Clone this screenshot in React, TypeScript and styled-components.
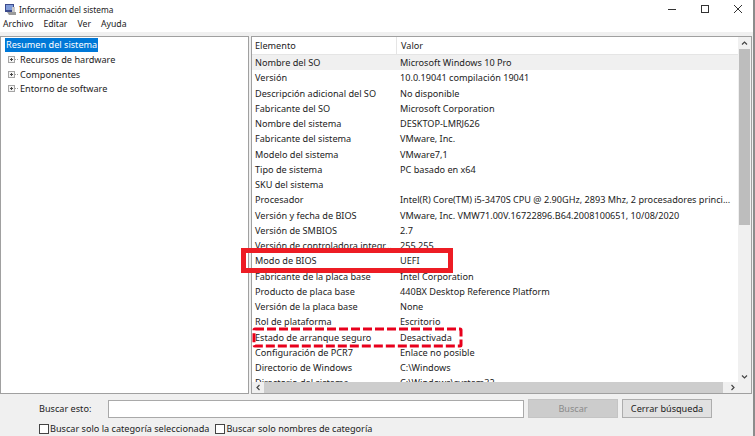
import styled, { createGlobalStyle } from "styled-components";

const GlobalStyle = createGlobalStyle`
  html, body {
    margin: 0;
    padding: 0;
    background: #f0f0f0;
  }
  * {
    box-sizing: border-box;
  }
`;

const Win = styled.div`
  position: relative;
  width: 755px;
  height: 436px;
  overflow: hidden;
  display: flex;
  flex-direction: column;
  background: #f0f0f0;
  border-right: 2px solid #8c8c8c;
  font-family: "Noto Sans", "Open Sans", sans-serif;
  font-size: 9.15px;
  color: #222;
`;

const TitleBar = styled.div`
  height: 18px;
  flex: none;
  display: flex;
  align-items: center;
  background: #fff;
  padding-left: 4px;
`;

const TitleText = styled.span`
  margin-left: 2px;
  font-size: 8.3px;
`;

const WinButtons = styled.div`
  margin-left: auto;
  display: flex;
  align-items: center;
  gap: 23px;
  padding-right: 10px;
`;

const MenuBar = styled.div`
  height: 14px;
  flex: none;
  display: flex;
  align-items: center;
  gap: 10px;
  padding: 0 0 2px 3px;
  background: #fff;
  font-size: 8.7px;
`;

const Main = styled.div`
  height: 358px;
  margin-top: 4px;
  flex: none;
  display: flex;
  gap: 2px;
  padding-right: 1px;
`;

const TreePane = styled.div`
  width: 249px;
  flex: none;
  padding: 1px 0 0 4px;
  background: #fff;
  border: 1px solid #a0a0a0;
`;

const TreeRow = styled.div`
  height: 14.5px;
  display: flex;
  align-items: center;
  white-space: nowrap;
`;

const Selected = styled.span`
  background: #0078d7;
  color: #fff;
  padding: 0 1px;
  line-height: 14px;
`;

const Plus = styled.span`
  position: relative;
  width: 7px;
  height: 7px;
  margin-left: 3px;
  border: 1px solid #a5a5a5;
  background: #f4f4f4;
  &::before {
    content: "";
    position: absolute;
    left: 1px;
    top: 2px;
    width: 3px;
    height: 1px;
    background: #444;
  }
  &::after {
    content: "";
    position: absolute;
    left: 2px;
    top: 1px;
    width: 1px;
    height: 3px;
    background: #444;
  }
`;

const Connector = styled.span`
  width: 3px;
  margin-right: 2px;
  border-top: 1px dotted #a5a5a5;
`;

const ListPane = styled.div`
  position: relative;
  flex: 1;
  min-width: 0;
  display: flex;
  background: #fff;
  border: 1px solid #a0a0a0;
`;

const ListBody = styled.div`
  flex: 1;
  min-width: 0;
  display: flex;
  flex-direction: column;
`;

const Table = styled.div`
  flex: 1;
  min-height: 0;
  overflow: hidden;
`;

const HeaderRow = styled.div`
  height: 18px;
  display: grid;
  grid-template-columns: 144px 1fr;
  align-items: center;
  border-bottom: 1px solid #e5e5e5;
`;

const HeaderCell = styled.div<{ $sep?: boolean }>`
  height: 100%;
  display: flex;
  align-items: center;
  padding-left: ${(p) => (p.$sep ? "4px" : "3px")};
  border-left: ${(p) => (p.$sep ? "1px solid #e5e5e5" : "none")};
`;

const Row = styled.div<{ $shade?: boolean }>`
  height: 15.25px;
  display: grid;
  grid-template-columns: 144px 1fr;
  align-items: center;
  background: ${(p) => (p.$shade ? "#f0f0f0" : "#fff")};
  white-space: nowrap;
`;

const Cell = styled.div`
  padding-left: 3px;
  overflow: hidden;
`;

const ValueCell = styled(Cell)`
  padding-left: 4px;
`;

const VScroll = styled.div`
  width: 13px;
  flex: none;
  display: flex;
  flex-direction: column;
  background: #f0f0f0;
`;

const Arrow = styled.div`
  height: 12px;
  flex: none;
  display: flex;
  align-items: center;
  justify-content: center;
`;

const VThumb = styled.div`
  height: 176px;
  flex: none;
  margin: 0 1px;
  background: #bdbdbd;
`;

const VTrack = styled.div`
  flex: 1;
`;

const HScroll = styled.div`
  height: 11px;
  flex: none;
  display: flex;
  background: #f0f0f0;
`;

const HArrow = styled.div`
  width: 12px;
  flex: none;
  display: flex;
  align-items: center;
  justify-content: center;
`;

const HThumb = styled.div`
  flex: 1;
  background: #cdcdcd;
`;

const HTrack = styled.div`
  width: 3px;
  flex: none;
`;

const Corner = styled.div`
  height: 11px;
  flex: none;
  background: #f0f0f0;
`;

const Mark = styled.div<{ $x: number; $y: number; $w: number; $h: number }>`
  position: absolute;
  left: ${(p) => p.$x}px;
  top: ${(p) => p.$y}px;
  width: ${(p) => p.$w}px;
  height: ${(p) => p.$h}px;
  border: 5px solid #ed1c24;
  pointer-events: none;
`;

const DashedMark = styled.svg`
  position: absolute;
  left: 0;
  top: 290px;
  pointer-events: none;
`;

const SearchRow = styled.div`
  margin-top: 5px;
  height: 19px;
  flex: none;
  display: flex;
  align-items: center;
  padding-left: 39px;
`;

const SearchLabel = styled.span`
  width: 69px;
  flex: none;
`;

const SearchInput = styled.div`
  width: 416px;
  height: 18px;
  flex: none;
  background: #fff;
  border: 1px solid #a9a9a9;
`;

const Btn = styled.div<{ $off?: boolean }>`
  height: 19px;
  width: 90px;
  flex: none;
  display: flex;
  align-items: center;
  justify-content: center;
  margin-left: 4px;
  background: ${(p) => (p.$off ? "#cccccc" : "#e1e1e1")};
  color: ${(p) => (p.$off ? "#8a8a8a" : "#222")};
  border: 1px solid ${(p) => (p.$off ? "#c4c4c4" : "#adadad")};
`;

const CheckRow = styled.div`
  margin-top: 4px;
  display: flex;
  align-items: center;
  padding-left: 39px;
  gap: 6px;
`;

const CheckItem = styled.label`
  display: flex;
  align-items: center;
  gap: 1px;
  white-space: nowrap;
`;

const Box = styled.span`
  width: 10px;
  height: 10px;
  flex: none;
  background: #fff;
  border: 1px solid #444;
`;

const rows = [
  ["Nombre del SO", "Microsoft Windows 10 Pro"],
  ["Versión", "10.0.19041 compilación 19041"],
  ["Descripción adicional del SO", "No disponible"],
  ["Fabricante del SO", "Microsoft Corporation"],
  ["Nombre del sistema", "DESKTOP-LMRJ626"],
  ["Fabricante del sistema", "VMware, Inc."],
  ["Modelo del sistema", "VMware7,1"],
  ["Tipo de sistema", "PC basado en x64"],
  ["SKU del sistema", ""],
  ["Procesador", "Intel(R) Core(TM) i5-3470S CPU @ 2.90GHz, 2893 Mhz, 2 procesadores princi..."],
  ["Versión y fecha de BIOS", "VMware, Inc. VMW71.00V.16722896.B64.2008100651, 10/08/2020"],
  ["Versión de SMBIOS", "2.7"],
  ["Versión de controladora integr...", "255.255"],
  ["Modo de BIOS", "UEFI"],
  ["Fabricante de la placa base", "Intel Corporation"],
  ["Producto de placa base", "440BX Desktop Reference Platform"],
  ["Versión de la placa base", "None"],
  ["Rol de plataforma", "Escritorio"],
  ["Estado de arranque seguro", "Desactivada"],
  ["Configuración de PCR7", "Enlace no posible"],
  ["Directorio de Windows", "C:\\Windows"],
  ["Directorio del sistema", "C:\\Windows\\system32"],
];

const Chevron = ({ d }: { d: string }) => (
  <svg width="7" height="7" viewBox="0 0 7 7" fill="none" stroke="#444" strokeWidth="1.2">
    <path d={d} />
  </svg>
);

function App() {
  return (
    <Win>
      <GlobalStyle />
      <TitleBar>
        <svg width="13" height="13" viewBox="0 0 13 13">
          <rect x="1" y="1" width="9" height="8" fill="#3b4a8c" />
          <rect x="2" y="2" width="7" height="5" fill="#7f9bd8" />
          <path d="M3 9h9v3H5z" fill="#9a9a9a" />
          <rect x="8" y="4" width="3" height="5" fill="#c9c9c9" />
        </svg>
        <TitleText>Información del sistema</TitleText>
        <WinButtons>
          <svg width="10" height="10" viewBox="0 0 10 10" stroke="#333" fill="none">
            <path d="M1 5.5h8" />
          </svg>
          <svg width="10" height="10" viewBox="0 0 10 10" stroke="#333" fill="none">
            <rect x="1.5" y="1.5" width="7" height="7" />
          </svg>
          <svg width="10" height="10" viewBox="0 0 10 10" stroke="#333" fill="none">
            <path d="M1 1l8 8M9 1l-8 8" />
          </svg>
        </WinButtons>
      </TitleBar>
      <MenuBar>
        <span>Archivo</span>
        <span>Editar</span>
        <span>Ver</span>
        <span>Ayuda</span>
      </MenuBar>
      <Main>
        <TreePane>
          <TreeRow>
            <Selected>Resumen del sistema</Selected>
          </TreeRow>
          <TreeRow>
            <Plus />
            <Connector />
            Recursos de hardware
          </TreeRow>
          <TreeRow>
            <Plus />
            <Connector />
            Componentes
          </TreeRow>
          <TreeRow>
            <Plus />
            <Connector />
            Entorno de software
          </TreeRow>
        </TreePane>
        <ListPane>
          <ListBody>
            <Table>
              <HeaderRow>
                <HeaderCell>Elemento</HeaderCell>
                <HeaderCell $sep>Valor</HeaderCell>
              </HeaderRow>
              {rows.map(([name, value], i) => (
                <Row key={name} $shade={i === 0}>
                  <Cell>{name}</Cell>
                  <ValueCell>{value}</ValueCell>
                </Row>
              ))}
            </Table>
            <HScroll>
              <HArrow>
                <Chevron d="M4.5 1L2 3.5 4.5 6" />
              </HArrow>
              <HThumb />
              <HTrack />
              <HArrow>
                <Chevron d="M2.5 1L5 3.5 2.5 6" />
              </HArrow>
            </HScroll>
          </ListBody>
          <VScroll>
            <Arrow>
              <Chevron d="M1 4.5L3.5 2 6 4.5" />
            </Arrow>
            <VThumb />
            <VTrack />
            <Arrow>
              <Chevron d="M1 2.5L3.5 5 6 2.5" />
            </Arrow>
            <Corner />
          </VScroll>
          <Mark $x={-11} $y={211} $w={212} $h={25} />
          <DashedMark width="211" height="21" fill="none">
            <rect x="2" y="2" width="207" height="17" rx="1" stroke="#e8001c" strokeWidth="3" strokeDasharray="9 3" />
          </DashedMark>
        </ListPane>
      </Main>
      <SearchRow>
        <SearchLabel>Buscar esto:</SearchLabel>
        <SearchInput />
        <Btn $off>Buscar</Btn>
        <Btn>Cerrar búsqueda</Btn>
      </SearchRow>
      <CheckRow>
        <CheckItem>
          <Box />
          Buscar solo la categoría seleccionada
        </CheckItem>
        <CheckItem>
          <Box />
          Buscar solo nombres de categoría
        </CheckItem>
      </CheckRow>
    </Win>
  );
}

export default App;
